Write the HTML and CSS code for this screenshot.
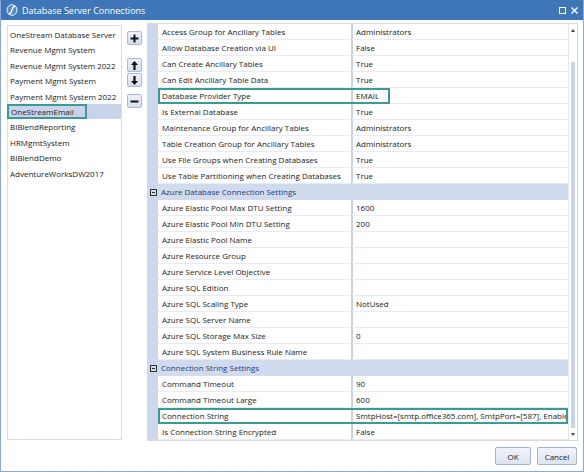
FILE: index.html
```html
<!DOCTYPE html>
<html lang="en">
<head>
    <meta charset="UTF-8">
    <title>Database Server Connections</title>
    <link rel="stylesheet" href="styles.css">
</head>
<body>
    <div class="window">
        <div class="titlebar">
            <svg class="app-icon" width="12" height="12" viewBox="0 0 12 12">
                <ellipse cx="6" cy="6" rx="5" ry="5.3" fill="rgba(255,255,255,0.15)" stroke="#fff" stroke-width="0.9"/>
                <path d="M3 9.6 C4.8 9.8 5.4 8.2 5.9 6 C6.4 3.8 7 2.3 9 2.4" fill="none" stroke="#fff" stroke-width="1.3" stroke-linecap="round"/>
            </svg>
            <span class="title">Database Server Connections</span>
            <div class="title-actions">
                <span class="maximize"></span>
                <svg width="7" height="7" viewBox="0 0 7 7">
                    <path d="M0.5 0.5 L6.5 6.5 M6.5 0.5 L0.5 6.5" stroke="#fff" stroke-width="1.4"/>
                </svg>
            </div>
        </div>

        <div class="content">
            <ul class="db-list">
                <li>OneStream Database Server</li>
                <li>Revenue Mgmt System</li>
                <li>Revenue Mgmt System 2022</li>
                <li>Payment Mgmt System</li>
                <li>Payment Mgmt System 2022</li>
                <li class="selected"><span>OneStreamEmail</span></li>
                <li>BIBlendReporting</li>
                <li>HRMgmtSystem</li>
                <li>BIBlendDemo</li>
                <li>AdventureWorksDW2017</li>
            </ul>

            <div class="tools">
                <button class="tool">
                    <svg width="9" height="9" viewBox="0 0 9 9"><path d="M4.5 0.5v8M0.5 4.5h8" stroke="#111" stroke-width="2"/></svg>
                </button>
                <button class="tool tool-up">
                    <svg width="7" height="9" viewBox="0 0 7 9"><path d="M3.5 0 L7 4 H4.6 V9 H2.4 V4 H0 Z" fill="#111"/></svg>
                </button>
                <button class="tool tool-down">
                    <svg width="7" height="9" viewBox="0 0 7 9"><path d="M3.5 9 L7 5 H4.6 V0 H2.4 V5 H0 Z" fill="#111"/></svg>
                </button>
                <button class="tool tool-remove">
                    <svg width="9" height="9" viewBox="0 0 9 9"><path d="M0.5 4.5h8" stroke="#111" stroke-width="2"/></svg>
                </button>
            </div>

            <div class="grid">
                <div class="props">
                    <div class="row"><div class="gutter"></div><div class="name">Access Group for Ancillary Tables</div><div class="value">Administrators</div></div>
                    <div class="row"><div class="gutter"></div><div class="name">Allow Database Creation via UI</div><div class="value">False</div></div>
                    <div class="row"><div class="gutter"></div><div class="name">Can Create Ancillary Tables</div><div class="value">True</div></div>
                    <div class="row"><div class="gutter"></div><div class="name">Can Edit Ancillary Table Data</div><div class="value">True</div></div>
                    <div class="row"><div class="gutter"></div><div class="name">Database Provider Type</div><div class="value">EMAIL</div><span class="mark mark-short"></span></div>
                    <div class="row"><div class="gutter"></div><div class="name">Is External Database</div><div class="value">True</div></div>
                    <div class="row"><div class="gutter"></div><div class="name">Maintenance Group for Ancillary Tables</div><div class="value">Administrators</div></div>
                    <div class="row"><div class="gutter"></div><div class="name">Table Creation Group for Ancillary Tables</div><div class="value">Administrators</div></div>
                    <div class="row"><div class="gutter"></div><div class="name">Use File Groups when Creating Databases</div><div class="value">True</div></div>
                    <div class="row"><div class="gutter"></div><div class="name">Use Table Partitioning when Creating Databases</div><div class="value">True</div></div>

                    <div class="row category"><div class="gutter"><span class="toggle"></span></div><div class="cat-name">Azure Database Connection Settings</div></div>
                    <div class="row"><div class="gutter"></div><div class="name">Azure Elastic Pool Max DTU Setting</div><div class="value">1600</div></div>
                    <div class="row"><div class="gutter"></div><div class="name">Azure Elastic Pool Min DTU Setting</div><div class="value">200</div></div>
                    <div class="row"><div class="gutter"></div><div class="name">Azure Elastic Pool Name</div><div class="value"></div></div>
                    <div class="row"><div class="gutter"></div><div class="name">Azure Resource Group</div><div class="value"></div></div>
                    <div class="row"><div class="gutter"></div><div class="name">Azure Service Level Objective</div><div class="value"></div></div>
                    <div class="row"><div class="gutter"></div><div class="name">Azure SQL Edition</div><div class="value"></div></div>
                    <div class="row"><div class="gutter"></div><div class="name">Azure SQL Scaling Type</div><div class="value">NotUsed</div></div>
                    <div class="row"><div class="gutter"></div><div class="name">Azure SQL Server Name</div><div class="value"></div></div>
                    <div class="row"><div class="gutter"></div><div class="name">Azure SQL Storage Max Size</div><div class="value">0</div></div>
                    <div class="row"><div class="gutter"></div><div class="name">Azure SQL System Business Rule Name</div><div class="value"></div></div>

                    <div class="row category"><div class="gutter"><span class="toggle"></span></div><div class="cat-name">Connection String Settings</div></div>
                    <div class="row"><div class="gutter"></div><div class="name">Command Timeout</div><div class="value">90</div></div>
                    <div class="row"><div class="gutter"></div><div class="name">Command Timeout Large</div><div class="value">600</div></div>
                    <div class="row"><div class="gutter"></div><div class="name">Connection String</div><div class="value">SmtpHost=[smtp.office365.com], SmtpPort=[587], EnableSsl=[True]</div><span class="mark mark-full"></span></div>
                    <div class="row"><div class="gutter"></div><div class="name">Is Connection String Encrypted</div><div class="value">False</div></div>
                </div>

                <div class="scrollbar">
                    <div class="sb-arrow"><span class="tri-up"></span></div>
                    <div class="thumb"></div>
                    <div class="sb-arrow"><span class="tri-down"></span></div>
                </div>
            </div>
        </div>

        <div class="footer">
            <button class="btn btn-ok">OK</button>
            <button class="btn btn-cancel">Cancel</button>
        </div>
    </div>
</body>
</html>
```

FILE: styles.css
```css
* {
    margin: 0;
    padding: 0;
    box-sizing: border-box;
}

body {
    font-family: "Open Sans", "Noto Sans", sans-serif;
    font-size: 8px;
    color: #222;
    background: #fff;
}

.window {
    width: 584px;
    height: 472px;
    border: 1px solid #8ea9d5;
    border-top: 0;
    display: flex;
    flex-direction: column;
    overflow: hidden;
}

/* title bar */
.titlebar {
    height: 20px;
    margin: 0 -1px;
    padding: 0 6px;
    background: #3e76b7;
    color: #fff;
    display: flex;
    align-items: center;
    flex: none;
}

.app-icon {
    margin-right: 4px;
}

.title {
    flex: 1;
    font-size: 9px;
}

.title-actions {
    display: flex;
    align-items: center;
    gap: 5px;
}

.maximize {
    width: 7px;
    height: 7px;
    border: 1.5px solid #fff;
}

/* main area */
.content {
    display: flex;
    padding: 3px 5px 0 6px;
    flex: none;
}

.db-list {
    width: 115px;
    height: 415px;
    margin-top: 2px;
    padding-top: 1px;
    border: 1px solid #d8dce4;
    list-style: none;
    flex: none;
}

.db-list li {
    height: 15.4px;
    line-height: 15.4px;
    padding-left: 2px;
    white-space: nowrap;
}

.db-list li.selected {
    background: #c9d4ea;
    padding-left: 0;
}

.db-list li.selected span {
    display: block;
    width: 80px;
    height: 15.4px;
    margin-left: -1px;
    padding-left: 2px;
    line-height: 11.4px;
    border: 2px solid #3b9a94;
}

.tools {
    width: 15px;
    margin-left: 5px;
    padding-top: 8px;
    display: flex;
    flex-direction: column;
    flex: none;
}

.tool {
    width: 15px;
    height: 14px;
    border: 1px solid #a9b9d6;
    border-radius: 2px;
    background: linear-gradient(#eef2f9, #d5deed);
    display: flex;
    align-items: center;
    justify-content: center;
}

.tool-up {
    margin-top: 13px;
}

.tool-down {
    margin-top: 1px;
}

.tool-remove {
    margin-top: 7px;
}

/* property grid */
.grid {
    width: 431px;
    height: 418px;
    margin-left: 5px;
    border: 1px solid #d5dae3;
    display: flex;
    flex: none;
}

.props {
    flex: 1;
    min-width: 0;
    display: flex;
    flex-direction: column;
}

.row {
    height: 16px;
    display: flex;
    position: relative;
}

.gutter {
    width: 10px;
    flex: none;
    background: #cdd8ee;
    display: flex;
    align-items: center;
    justify-content: center;
}

.name {
    width: 193px;
    flex: none;
    padding-left: 4px;
    line-height: 15px;
    border-bottom: 1px solid #e8ebf0;
    white-space: nowrap;
    overflow: hidden;
}

.value {
    flex: 1;
    min-width: 0;
    padding-left: 3px;
    line-height: 15px;
    border-left: 2px solid #c6d2e8;
    border-bottom: 1px solid #e8ebf0;
    white-space: nowrap;
    overflow: hidden;
}

.row.category {
    background: #d0dbef;
}

.cat-name {
    flex: 1;
    padding-left: 3px;
    line-height: 16px;
    color: #22406b;
}

.toggle {
    width: 7px;
    height: 7px;
    border: 1px solid #333;
    position: relative;
}

.toggle::after {
    content: "";
    position: absolute;
    left: 1px;
    right: 1px;
    top: 2px;
    height: 1px;
    background: #333;
}

/* highlight box drawn over a row */
.mark {
    position: absolute;
    left: 10px;
    top: 0;
    height: 16px;
    border: 2px solid #3b9a94;
    pointer-events: none;
}

.mark-short {
    width: 232px;
}

.mark-full {
    right: 0;
}

.scrollbar {
    width: 9px;
    flex: none;
    border-left: 1px solid #e3e6ec;
    display: flex;
    flex-direction: column;
    align-items: center;
}

.sb-arrow {
    height: 12px;
    display: flex;
    align-items: center;
    justify-content: center;
}

.tri-up {
    border-left: 2px solid transparent;
    border-right: 2px solid transparent;
    border-bottom: 3px solid #444;
}

.tri-down {
    border-left: 2px solid transparent;
    border-right: 2px solid transparent;
    border-top: 3px solid #444;
}

.thumb {
    width: 4px;
    flex: 1;
    margin-top: 26px;
    background: #c9d4e8;
}

/* dialog buttons */
.footer {
    display: flex;
    justify-content: flex-end;
    gap: 6px;
    padding: 6px 6px 0 0;
}

.btn {
    height: 18px;
    font-family: inherit;
    font-size: 8px;
    color: #222;
    border: 1px solid #a3b4cf;
    border-radius: 2px;
    background: linear-gradient(#f1f4f9, #dde4ef);
}

.btn-ok {
    width: 36px;
}

.btn-cancel {
    width: 40px;
}
```
